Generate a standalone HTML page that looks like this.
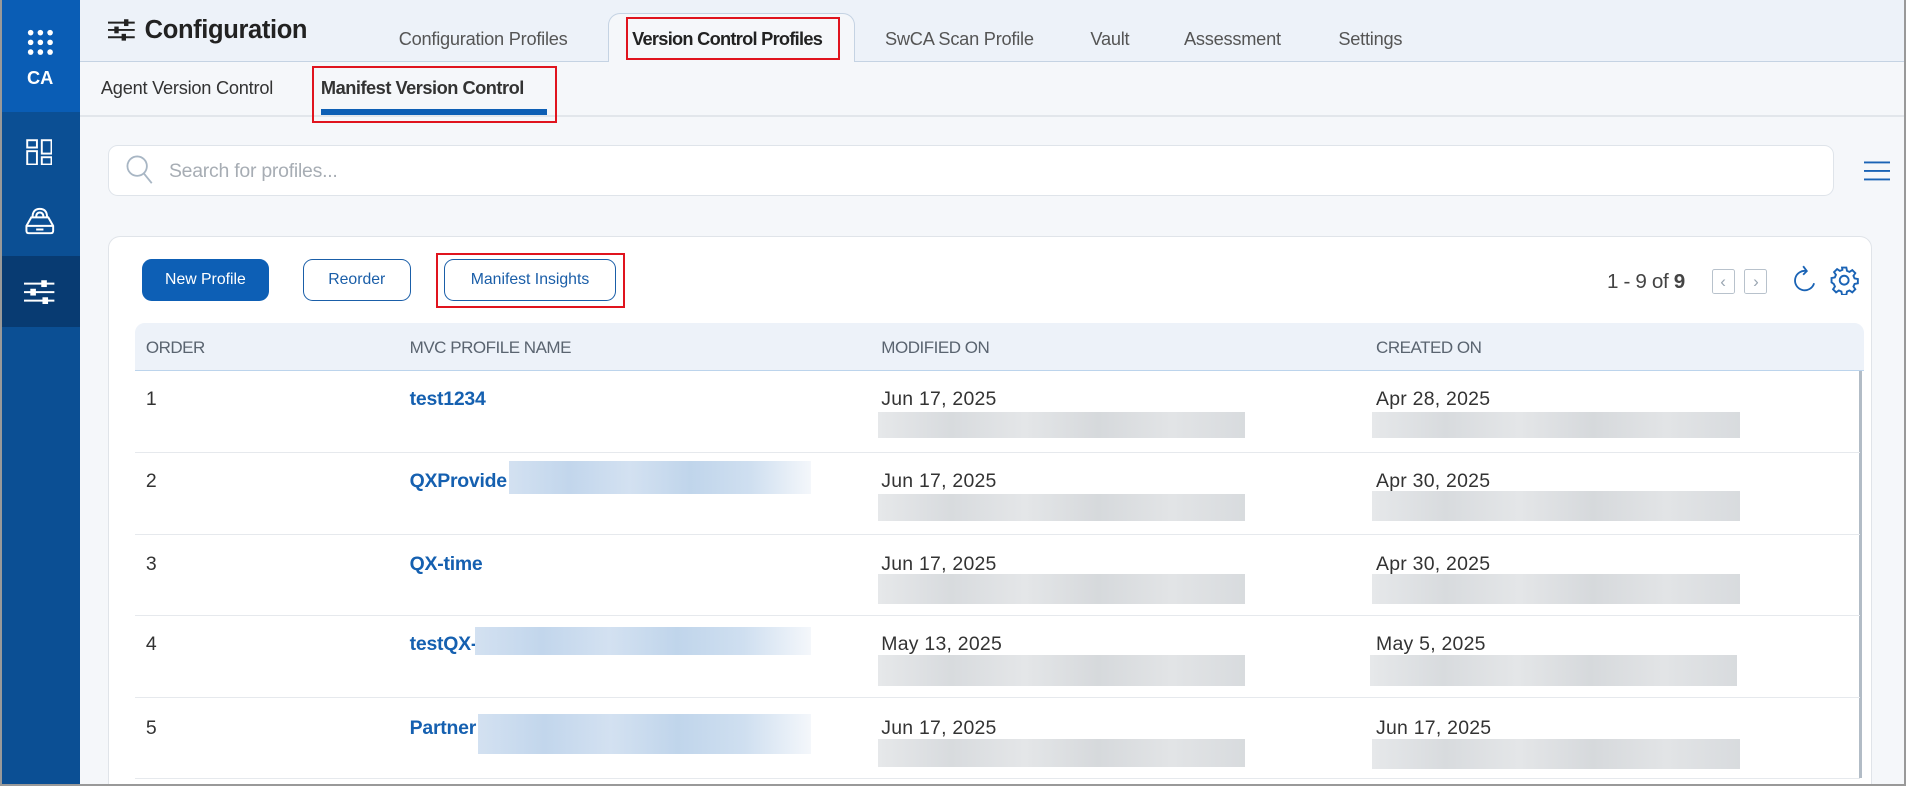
<!DOCTYPE html>
<html><head><meta charset="utf-8"><style>
html,body{margin:0;padding:0;width:1906px;height:787px;overflow:hidden;background:#fff}
#w{zoom:1.2156;width:1568px;height:647px;position:relative;font-family:"Liberation Sans",sans-serif;background:#f5f7fa;overflow:hidden}
.a{position:absolute}
.sb{left:0;top:0;width:66px;height:647px;background:#0b4f94}
.tab{position:absolute;top:23px;font-size:15px;color:#555;letter-spacing:-0.2px}
.th{position:absolute;top:278px;font-size:14px;color:#5a6470;letter-spacing:-0.4px}
.cell{position:absolute;font-size:16px;color:#333;letter-spacing:0.2px}
.nm{position:absolute;font-size:16px;color:#1560b0;font-weight:bold;letter-spacing:-0.2px}
.gb{position:absolute;height:21px;background:linear-gradient(90deg,#e6e8ea,#d8dbde,#e4e6e8,#d6d9dc,#e2e4e6,#d8dbde)}
.bb{position:absolute;background:linear-gradient(90deg,#d3e1f1,#c2d6ec,#d3e1f1,#c0d5eb,#cfdff0,#f4f7fb)}
.rl{position:absolute;left:111px;width:1419px;height:1px;background:#e6e9ed}
.red{position:absolute;border:2px solid #e0141e;box-sizing:border-box}
</style></head><body><div id="w">
<div class="a" style="left:0;top:0;width:1568px;height:1px;background:#999"></div>
<div class="a" style="left:66px;top:0;width:1502px;height:50px;background:#edf2f9;border-bottom:1px solid #c5d3e3"></div>
<div class="a" style="left:66px;top:95px;width:1502px;height:1px;background:#e2e6eb"></div>
<div class="a sb"></div>
<div class="a" style="left:0;top:0;width:66px;height:92px;background:#0a5db5"></div>
<div class="a" style="left:0;top:211px;width:66px;height:58px;background:#083b72"></div>
<div class="a" style="left:1566px;top:0;width:2px;height:647px;background:#999"></div>
<div class="a" style="left:0;top:0;width:2px;height:647px;background:#999"></div>
<svg class="a" style="left:22px;top:24px" width="22" height="22" viewBox="0 0 22 22" fill="#fff"><circle cx="3" cy="3" r="2.3"/><circle cx="11" cy="3" r="2.3"/><circle cx="19" cy="3" r="2.3"/><circle cx="3" cy="11" r="2.3"/><circle cx="11" cy="11" r="2.3"/><circle cx="19" cy="11" r="2.3"/><circle cx="3" cy="19" r="2.3"/><circle cx="11" cy="19" r="2.3"/><circle cx="19" cy="19" r="2.3"/></svg>
<div class="a" style="left:0;width:66px;top:55px;text-align:center;color:#fff;font-weight:bold;font-size:15px">CA</div>
<svg class="a" style="left:21px;top:114px" width="22" height="22" viewBox="0 0 22 22" fill="none" stroke="#fff" stroke-width="1.6"><rect x="1" y="1" width="8" height="6"/><rect x="1" y="10" width="8" height="11"/><rect x="13" y="1" width="8" height="11"/><rect x="13" y="15" width="8" height="6"/></svg>
<svg class="a" style="left:20px;top:168px" width="26" height="26" viewBox="0 0 26 26" fill="none" stroke="#fff" stroke-width="1.6"><path d="M2 18 L6 11 H20 L24 18 V22 Q24 24 22 24 H4 Q2 24 2 22 Z M2 18 H24 M10 21 H16"/><path d="M7 11 Q7 4 13 4 Q19 4 19 11 M10 11 Q10 7 13 7 Q16 7 16 11"/></svg>
<svg class="a" style="left:20px;top:230px" width="25" height="20" viewBox="0 0 25 20" stroke="#fff" stroke-width="1.6" fill="#fff"><path d="M0 3 H25 M0 10 H25 M0 17 H25"/><rect x="15" y="1" width="3" height="4"/><rect x="6" y="8" width="3" height="4"/><rect x="16" y="15" width="3" height="4"/></svg>
<svg class="a" style="left:89px;top:16px" width="22" height="18" viewBox="0 0 22 18" stroke="#222" stroke-width="1.6" fill="#222"><path d="M0 3 H22 M0 9 H22 M0 15 H22"/><rect x="14" y="1" width="2" height="4"/><rect x="6" y="7" width="2" height="4"/><rect x="12" y="13" width="2" height="4"/></svg>
<div class="a" style="left:119px;top:13px;font-size:21px;font-weight:bold;color:#222;letter-spacing:-0.3px">Configuration</div>
<div class="a" style="left:500px;top:11px;width:203px;height:40px;background:#f5f7fa;border:1px solid #c5d3e3;border-bottom:none;border-radius:10px 10px 0 0;box-sizing:border-box"></div>
<div class="tab" style="left:328px">Configuration Profiles</div>
<div class="tab" style="left:520px;color:#222;font-weight:bold;letter-spacing:-0.6px">Version Control Profiles</div>
<div class="tab" style="left:728px">SwCA Scan Profile</div>
<div class="tab" style="left:897px">Vault</div>
<div class="tab" style="left:974px">Assessment</div>
<div class="tab" style="left:1101px">Settings</div>
<div class="red" style="left:515px;top:14px;width:176px;height:35px"></div>
<div class="a" style="left:83px;top:63px;font-size:15px;color:#333;letter-spacing:-0.2px">Agent Version Control</div>
<div class="a" style="left:264px;top:63px;font-size:15px;color:#333;font-weight:bold;letter-spacing:-0.4px">Manifest Version Control</div>
<div class="a" style="left:264px;top:90px;width:186px;height:5px;background:#0d5fb5"></div>
<div class="red" style="left:257px;top:54px;width:201px;height:47px"></div>
<div class="a" style="left:89px;top:119px;width:1420px;height:42px;background:#fff;border:1px solid #dfe4ea;border-radius:8px;box-sizing:border-box"></div>
<svg class="a" style="left:103px;top:127px" width="24" height="26" viewBox="0 0 24 26" fill="none" stroke="#a8b6c4" stroke-width="1.5"><circle cx="10" cy="10" r="8"/><path d="M15.5 16 L22 24"/></svg>
<div class="a" style="left:139px;top:132px;font-size:16px;color:#a7adb4;letter-spacing:-0.2px">Search for profiles...</div>
<svg class="a" style="left:1533px;top:132px" width="22" height="18" stroke="#1a63b5" stroke-width="1.6"><path d="M0 2 H22 M0 9 H22 M0 16 H22"/></svg>
<div class="a" style="left:89px;top:194px;width:1451px;height:470px;background:#fff;border:1px solid #e0e4e9;border-radius:10px;box-sizing:border-box"></div>
<div class="a" style="left:117px;top:213px;width:104px;height:35px;background:#0d5fb5;border-radius:8px;color:#fff;font-size:13px;text-align:center;line-height:35px">New Profile</div>
<div class="a" style="left:249px;top:213px;width:89px;height:35px;border:1px solid #1a5ea8;border-radius:8px;color:#1a5ea8;font-size:13px;text-align:center;line-height:33px;box-sizing:border-box">Reorder</div>
<div class="a" style="left:365px;top:213px;width:142px;height:35px;border:1px solid #1a5ea8;border-radius:8px;color:#1a5ea8;font-size:13px;text-align:center;line-height:33px;box-sizing:border-box">Manifest Insights</div>
<div class="red" style="left:359px;top:208px;width:155px;height:45px"></div>
<div class="a" style="left:1322px;top:222px;font-size:17px;color:#444;letter-spacing:-0.3px">1 - 9 of <b>9</b></div>
<div class="a" style="left:1408px;top:221px;width:19px;height:21px;border:1px solid #b8c2cc;border-radius:2px;box-sizing:border-box;color:#9aa6b2;font-size:14px;text-align:center;line-height:19px">&lsaquo;</div>
<div class="a" style="left:1435px;top:221px;width:19px;height:21px;border:1px solid #b8c2cc;border-radius:2px;box-sizing:border-box;color:#9aa6b2;font-size:14px;text-align:center;line-height:19px">&rsaquo;</div>
<svg class="a" style="left:1473px;top:218px" width="22" height="26" viewBox="0 0 22 26" fill="none" stroke="#1a63b5" stroke-width="1.5"><path d="M13 5 A8 8 0 1 0 19 15"/><path d="M10 1 L13 5 L10 8"/></svg>
<svg class="a" style="left:1505px;top:218px" width="25" height="25" viewBox="0 0 24 24" fill="none" stroke="#1a63b5" stroke-width="1.5"><circle cx="12" cy="12" r="3.5"/><path d="M10.3 2h3.4l.5 2.6 2 .9 2.2-1.5 2.4 2.4-1.5 2.2.9 2 2.6.5v3.4l-2.6.5-.9 2 1.5 2.2-2.4 2.4-2.2-1.5-2 .9-.5 2.6h-3.4l-.5-2.6-2-.9-2.2 1.5-2.4-2.4 1.5-2.2-.9-2L2 13.7v-3.4l2.6-.5.9-2L4 5.6 6.4 3.2l2.2 1.5 2-.9z"/></svg>
<div class="a" style="left:111px;top:266px;width:1422px;height:39px;background:#edf2f9;border-radius:8px 8px 0 0;border-bottom:1px solid #bcd4ec;box-sizing:border-box"></div>
<div class="th" style="left:120px">ORDER</div>
<div class="th" style="left:337px">MVC PROFILE NAME</div>
<div class="th" style="left:725px">MODIFIED ON</div>
<div class="th" style="left:1132px">CREATED ON</div>
<div class="a" style="left:1529px;top:305px;width:3px;height:335px;background:#b2bcc6"></div>

<div class="cell" style="left:120px;top:319px">1</div><div class="nm" style="left:337px;top:319px">test1234</div>
<div class="cell" style="left:725px;top:319px">Jun 17, 2025</div><div class="gb" style="left:722px;top:339px;width:302px"></div>
<div class="cell" style="left:1132px;top:319px">Apr 28, 2025</div><div class="gb" style="left:1129px;top:339px;width:302px"></div>
<div class="rl" style="top:372px"></div>

<div class="cell" style="left:120px;top:387px">2</div><div class="nm" style="left:337px;top:387px">QXProvide</div><div class="bb" style="left:419px;top:379px;width:248px;height:27px"></div>
<div class="cell" style="left:725px;top:387px">Jun 17, 2025</div><div class="gb" style="left:722px;top:406px;width:302px;height:23px"></div>
<div class="cell" style="left:1132px;top:387px">Apr 30, 2025</div><div class="gb" style="left:1129px;top:404px;width:302px;height:25px"></div>
<div class="rl" style="top:439px"></div>

<div class="cell" style="left:120px;top:455px">3</div><div class="nm" style="left:337px;top:455px">QX-time</div>
<div class="cell" style="left:725px;top:455px">Jun 17, 2025</div><div class="gb" style="left:722px;top:472px;width:302px;height:25px"></div>
<div class="cell" style="left:1132px;top:455px">Apr 30, 2025</div><div class="gb" style="left:1129px;top:472px;width:302px;height:25px"></div>
<div class="rl" style="top:506px"></div>

<div class="cell" style="left:120px;top:521px">4</div><div class="nm" style="left:337px;top:521px">testQX-</div><div class="bb" style="left:391px;top:516px;width:276px;height:23px"></div>
<div class="cell" style="left:725px;top:521px">May 13, 2025</div><div class="gb" style="left:722px;top:539px;width:302px;height:25px"></div>
<div class="cell" style="left:1132px;top:521px">May 5, 2025</div><div class="gb" style="left:1127px;top:539px;width:302px;height:25px"></div>
<div class="rl" style="top:573px"></div>

<div class="cell" style="left:120px;top:590px">5</div><div class="nm" style="left:337px;top:590px">Partner</div><div class="bb" style="left:393px;top:587px;width:274px;height:33px"></div>
<div class="cell" style="left:725px;top:590px">Jun 17, 2025</div><div class="gb" style="left:722px;top:608px;width:302px;height:23px"></div>
<div class="cell" style="left:1132px;top:590px">Jun 17, 2025</div><div class="gb" style="left:1129px;top:608px;width:302px;height:25px"></div>
<div class="rl" style="top:640px"></div>
<div class="a" style="left:0;top:645px;width:1568px;height:2px;background:#999"></div>
</div></body></html>
